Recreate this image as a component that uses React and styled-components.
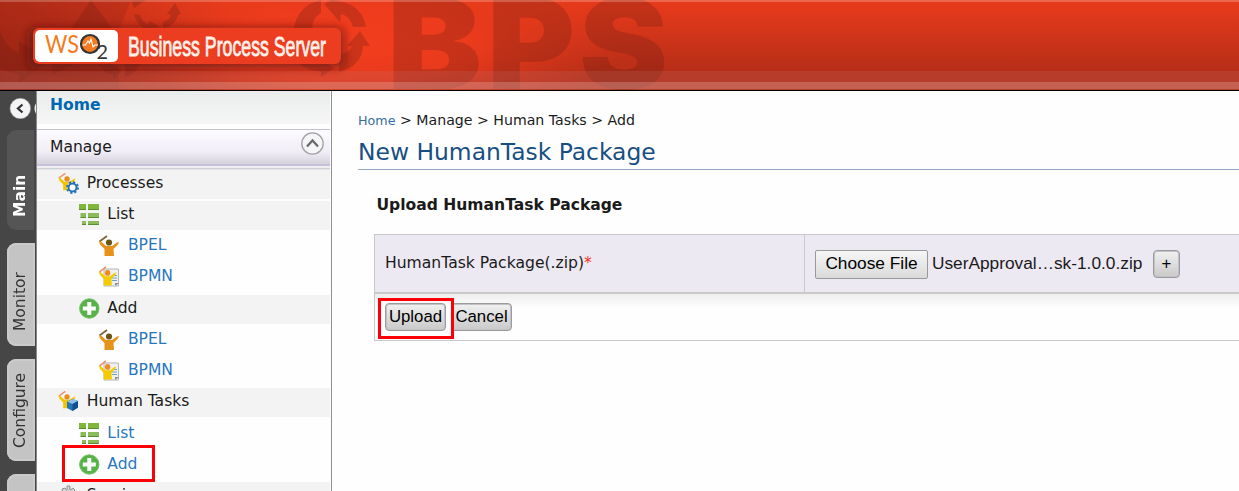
import React from 'react';
import styled, { createGlobalStyle, css } from 'styled-components';

const Global = createGlobalStyle`
  * { box-sizing: border-box; }
  body { margin: 0; background: #fefefe; color: #1a1a1a; font-family: "DejaVu Sans", sans-serif; overflow: hidden; }
`;
const Page = styled.div`
  height: 491px;
  display: flex;
  flex-direction: column;
  overflow: hidden;
`;
const Header = styled.header`
  height: 91px;
  flex: none;
  border-bottom: 1px solid #000;
  svg { display: block; }
`;
const Body = styled.div`
  flex: 1;
  min-height: 0;
  display: flex;
`;
const TabRail = styled.div`
  width: 37px;
  flex: none;
  background: #464646;
  border-right: 1px solid #8a8a8a;
  display: flex;
  flex-direction: column;
  gap: 13px;
  overflow: hidden;
`;
const Toggle = styled.div`
  height: 26px;
  flex: none;
  svg { display: block; }
`;
const Tab = styled.div`
  height: ${p => p.$height}px;
  flex: none;
  margin-left: 7px;
  width: ${p => (p.$active ? 27 : 28)}px;
  border-radius: 0 9px 9px 0;
  display: flex;
  justify-content: center;
  align-items: flex-start;
  writing-mode: vertical-rl;
  transform: rotate(180deg);
  font-size: 15.5px;
  line-height: 27px;
  ${p => p.$active
    ? css`background: #555; color: #fff; font-weight: bold;`
    : css`background: #c4c4c4; color: #333; box-shadow: inset 0 0 0 2px #cbcbcb;`}
`;
const TabLabel = styled.span`
  margin-top: ${p => p.$shift || 0}px;
  white-space: nowrap;
`;
const Menu = styled.nav`
  width: 295px;
  flex: none;
  border-right: 1px solid #8f8f8f;
  padding-right: 1px;
  display: flex;
  flex-direction: column;
  overflow: hidden;
  font-size: 15.55px;
`;
const HomeRow = styled.div`
  height: 33px;
  flex: none;
  margin-bottom: 5px;
  padding: 1px 13px 0;
  line-height: 26px;
  background: linear-gradient(#eaecec, #f6f6f6);
  color: #0067b1;
  font-weight: bold;
`;
const GroupRow = styled.div`
  height: 37px;
  flex: none;
  display: flex;
  justify-content: space-between;
  align-items: flex-start;
  padding: 2px 5px 0 13px;
  line-height: 30px;
  border-top: 1px solid #c5c1d2;
  border-bottom: 2px solid #c7c2da;
  background: linear-gradient(#fdfcff, #f0edf6 65%, #d5d2dc);
`;
const GroupEdge = styled.div`
  height: 4px;
  flex: none;
  margin-bottom: -0.5px;
  background: linear-gradient(#efeff2 0 50%, #d1cfd8 50% 75%, #e4e4e6 75%);
`;
const Item = styled.div`
  height: 31.25px;
  flex: none;
  display: flex;
  align-items: flex-start;
  padding-left: ${p => 21 + p.$level * 20.6}px;
  gap: 7.7px;
  line-height: 27px;
  color: ${p => (p.$link ? '#2876c0' : '#1a1a1a')};
  background: ${p => (p.$link ? '#fefefe' : 'linear-gradient(#f3f3f3, #f3f3f3) 0 0 / 100% 29px no-repeat')};
  svg { flex: none; margin-top: 3px; }
`;
const Content = styled.main`
  flex: 1;
  min-width: 0;
  padding: 18px 0 0 26px;
`;
const Crumbs = styled.div`
  height: 24px;
  line-height: 22px;
  font-size: 14.15px;
  white-space: pre;
`;
const CrumbLink = styled.span`
  font-size: 12.7px;
  color: #386d9f;
`;
const Title = styled.h2`
  margin: 0 0 21px;
  height: 37px;
  line-height: 38px;
  font-size: 23.4px;
  font-weight: normal;
  color: #184f82;
  border-bottom: 1px solid #94a6c2;
`;
const Panel = styled.section`
  margin-left: 16px;
`;
const PanelTitle = styled.h3`
  margin: 0;
  padding-left: 2.5px;
  height: 43px;
  line-height: 28px;
  font-size: 15.55px;
`;
const FormRow = styled.div`
  display: flex;
  height: 60px;
  border: solid #c9c9c9;
  border-width: 1px 0 2px 1px;
  background: #ede9f3;
`;
const LabelCell = styled.div`
  width: 430px;
  border-right: 1px solid #c9c9c9;
  padding-left: 10px;
  line-height: 56px;
  font-size: 15.6px;
`;
const Required = styled.span`
  color: #ff2d18;
`;
const FieldCell = styled.div`
  display: flex;
  align-items: center;
  padding: 1px 0 0 10px;
  font: 17.3px "Liberation Sans", sans-serif;
`;
const FileButton = styled.button`
  width: 113px;
  height: 29px;
  padding: 0 0 2px;
  margin-right: 4px;
  font: inherit;
  color: #000;
  border: 1px solid #999;
  border-radius: 2px;
  background: linear-gradient(#f6f6f6, #dadada);
`;
const FileName = styled.span`
  width: 221px;
  white-space: nowrap;
  padding-bottom: 2px;
`;
const Button = styled.button`
  width: ${p => p.$width}px;
  height: 28px;
  padding: 0;
  font: 16.8px "Liberation Sans", sans-serif;
  line-height: 24px;
  color: #000;
  border: 1px solid #9b9b9f;
  box-shadow: inset 0 0 0 1px #c3c3c5;
  border-radius: 4px;
  background: linear-gradient(#f1f1f1, #c9c9c9);
`;
const ButtonRow = styled.div`
  position: relative;
  height: 47px;
  display: flex;
  gap: 5px;
  padding: 9px 0 0 10px;
  border: solid #c9c9c9;
  border-width: 0 0 1px 1px;
  background: linear-gradient(#eeeeee, #fefefe 14px);
`;
const Highlight = styled.div`
  position: absolute;
  left: ${p => p.$x}px;
  top: ${p => p.$y}px;
  width: ${p => p.$w}px;
  height: ${p => p.$h}px;
  border: 3px solid #fb0007;
`;
const Anchor = styled.div`
  position: relative;
  height: 0;
`;

const Banner = () => (
  <svg width="1239" height="90" viewBox="0 0 1239 90">
    <defs>
      <linearGradient id="base" x2="0" y2="1">
        <stop offset="0" stopColor="#e63c1b" />
        <stop offset=".12" stopColor="#e2391b" />
        <stop offset=".78" stopColor="#b72e17" />
        <stop offset="1" stopColor="#b72e17" />
      </linearGradient>
      <radialGradient id="glow" gradientUnits="userSpaceOnUse" cx="0" cy="0" r="1" gradientTransform="translate(350 44) scale(270 80)">
        <stop offset="0" stopColor="#f23e1e" />
        <stop offset=".45" stopColor="#f03c1d" stopOpacity=".85" />
        <stop offset="1" stopColor="#e23a1b" stopOpacity="0" />
      </radialGradient>
      <linearGradient id="left" x2="1" y2="0">
        <stop offset="0" stopColor="#8c2013" stopOpacity=".5" />
        <stop offset="1" stopColor="#a42715" stopOpacity="0" />
      </linearGradient>
      <filter id="soft" x="-10%" y="-60%" width="120%" height="220%"><feGaussianBlur stdDeviation="5" /></filter>
    </defs>
    <rect width="1239" height="90" fill="url(#base)" />
    <rect width="700" height="90" fill="url(#glow)" />
    <rect width="230" height="90" fill="url(#left)" />
    <path d="M0 0H131L119 30V90H0Z" fill="#7a1d12" fillOpacity=".2" />
    <g fill="#6d1b12" fillOpacity=".28">
      <path d="M91 0L118 36V64H52V75L75 64L60 45Z" />
      <path d="M0 32Q8 50 19 53V41L48 60L19 84V74Q7 73 0 68Z" />
      <path d="M131 0L134 8L146 0ZM134 14L140 15Q142 22 148 24L150 21L160 27L148 30Q136 25 134 14ZM175 3L181 14L178 15Q175 27 163 28V22Q170 20 171 15L167 14Z" />
      <path d="M98 64Q104 74 113 74L114 79L122 70L112 64ZM125 64V77Q136 73 140 64Z" />
      <path d="M321 0V13Q313 17 312 28H294Q298 5 321 0ZM324 4L331 0Q362 2 366 27H353Q350 16 341 14L340 22ZM360 31L370 46H363Q362 66 339 72V55Q351 52 352 46H347ZM321 77V71Q306 72 296 60L318 58L334 68Z" />
      <g fontFamily="Inter, sans-serif" fontWeight="900" fontSize="125">
        <text x="387" y="89" textLength="95" lengthAdjust="spacingAndGlyphs">B</text>
        <text x="487" y="89" textLength="88" lengthAdjust="spacingAndGlyphs">P</text>
        <text x="579" y="89" textLength="89" lengthAdjust="spacingAndGlyphs">S</text>
      </g>
    </g>
    <rect x="27" y="27" width="318" height="42" rx="8" fill="#5c120c" fillOpacity=".6" filter="url(#soft)" />
    <rect y="71" width="1239" height="19" fill="#b9777a" fillOpacity=".2" />
    <rect y="82" width="1239" height="7" fill="#f0d0d0" fillOpacity=".25" />
    <rect width="1239" height="2" fill="#fff" fillOpacity=".22" />
    <rect x="33" y="28" width="308" height="36" rx="6" fill="#ec3d20" />
    <rect x="35" y="30" width="83" height="32" rx="5" fill="#fff" />
    <text x="45" y="53" fontFamily="Lato, sans-serif" fontSize="25" fill="#f47b20" textLength="34" lengthAdjust="spacingAndGlyphs">WS</text>
    <circle cx="90" cy="44" r="9" fill="#f47b20" stroke="#333" strokeWidth="2.2" />
    <path d="M82.5 45H85.5L88 41L89.5 43L91 39L93 47L95 45H98" fill="none" stroke="#fff" strokeWidth="1.1" />
    <text x="96.5" y="59" fontFamily="Lato, sans-serif" fontSize="20" fill="#333" textLength="11.5" lengthAdjust="spacingAndGlyphs">2</text>
    <text x="128" y="56" fontFamily='"Liberation Sans Narrow", "Liberation Sans", sans-serif' fontSize="27" fill="#fff0ea" stroke="#fff0ea" strokeWidth=".8" textLength="198" lengthAdjust="spacingAndGlyphs">Business Process Server</text>
  </svg>
);

const Person = ({ stick = '#d9772f', head = '#e68a17', body = '#f5c400' }) => (
  <>
    <path d="M0.5 6.5L8 1" stroke={stick} strokeWidth="1.7" />
    <path d="M0 6L2 6.5L7 11H13L18 7.5L20 7L19 9.5L14.5 14L15 21H5.5V14L1 9.5Z" fill={body} />
    <circle cx="10" cy="7.5" r="3.1" fill={head} />
  </>
);
const Icon = ({ type }) => (
  <svg width="21" height="21" viewBox="0 0 21 21">
    {type === 'bpel' && <Person stick="#7a6433" head="#6d5415" body="#e6931b" />}
    {type === 'bpmn' && (
      <>
        <path d="M5 3H19.5V20H5Z" fill="#eef0f2" stroke="#b5b5b5" />
        <path d="M12 12H18M13 14.5H18M15 9.5H18" stroke="#6ba3cf" strokeWidth="1.2" />
        <path d="M16 20V17H20L16 20Z" fill="#8f8f8f" />
        <g transform="scale(.86 .93)"><Person stick="#ef8b60" head="#ef8b1e" body="#f2cb00" /></g>
      </>
    )}
    {(type === 'process' || type === 'human') && (
      <g transform="translate(0.5 -0.5) scale(.85)"><Person stick="#ef8b60" head="#ea8a1a" body="#f5c400" /></g>
    )}
    {type === 'process' && (
      <>
        <circle cx="14.5" cy="14.5" r="5.5" fill="#fff" stroke="#2272b8" strokeWidth="1.8" strokeDasharray="2.2 2.1" />
        <circle cx="14.5" cy="14.5" r="4" fill="#fff" stroke="#2272b8" strokeWidth="2" />
      </>
    )}
    {type === 'human' && (
      <>
        <path d="M9 10.5L15 8L20 10V16.5L14.5 20L9 17Z" fill="#2476bb" />
        <path d="M9 10.5L15 8L20 10L14.5 13Z" fill="#8ec0e8" />
        <path d="M14.5 13L20 10V16.5L14.5 20Z" fill="#0d4f91" />
      </>
    )}
    {type === 'list' && (
      <>
        <path d="M0 0H7V6H0ZM9 0H20V6H9Z" fill="#80b63c" />
        <path d="M1.5 9H7V14H1.5ZM9 9H20V14H9ZM3 17H7V21H3ZM9 17H20V21H9Z" fill="#8abb5c" />
        <path d="M0 5.5H7M9 5.5H20M1.5 13.5H7M9 13.5H20M3 20.5H7M9 20.5H20" stroke="#568f2b" />
      </>
    )}
    {type === 'add' && (
      <>
        <circle cx="10.3" cy="10.5" r="9.7" fill="#57b347" stroke="#70bd62" />
        <path d="M10.3 4V17M3.8 10.5H16.8" stroke="#fff" strokeWidth="4" />
      </>
    )}
    {type === 'service' && (
      <path d="M2 8L5 7L4 4L7 3L9 5V1H12V5L15 3L17 5L16 7L19 8V20H2Z" fill="#d2d2d2" stroke="#929292" />
    )}
  </svg>
);

const items = [
  ['process', 'Processes', 0, false],
  ['list', 'List', 1, false],
  ['bpel', 'BPEL', 2, true],
  ['bpmn', 'BPMN', 2, true],
  ['add', 'Add', 1, false],
  ['bpel', 'BPEL', 2, true],
  ['bpmn', 'BPMN', 2, true],
  ['human', 'Human Tasks', 0, false],
  ['list', 'List', 1, true],
  ['add', 'Add', 1, true],
  ['service', 'Services', 0, false],
];

export default function App() {
  return (
    <Page>
      <Global />
      <Header><Banner /></Header>
      <Body>
        <TabRail>
          <Toggle>
            <svg width="36" height="28">
              <circle cx="20.3" cy="17.5" r="10.3" fill="#f4f4f6" stroke="#999" strokeWidth=".6" />
              <path d="M22.5 13.5L18 17.5L22.5 21.5" fill="none" stroke="#333" strokeWidth="2.3" />
              <circle cx="44.5" cy="17.5" r="10" fill="#eee" />
            </svg>
          </Toggle>
          <Tab $height={100} $active><TabLabel $shift={-32}>Main</TabLabel></Tab>
          <Tab $height={103}><TabLabel $shift={-14}>Monitor</TabLabel></Tab>
          <Tab $height={102}><TabLabel>Configure</TabLabel></Tab>
          <Tab $height={90} />
        </TabRail>
        <Menu>
          <HomeRow>Home</HomeRow>
          <GroupRow>
            Manage
            <svg width="24" height="24">
              <circle cx="11.5" cy="11.5" r="10.7" fill="#f5f4f7" stroke="#a2a2a2" strokeWidth="1.3" />
              <path d="M6 14.5L11.5 8.5L17 14.5" fill="none" stroke="#6a6a6a" strokeWidth="2.3" />
            </svg>
          </GroupRow>
          <GroupEdge />
          {items.map(([type, label, level, link], i) => (
            <Item key={i} $level={level} $link={link}><Icon type={type} />{label}</Item>
          ))}
        </Menu>
        <Content>
          <Crumbs><CrumbLink>Home</CrumbLink>{' > Manage > Human Tasks > Add'}</Crumbs>
          <Title>New HumanTask Package</Title>
          <Panel>
            <PanelTitle>Upload HumanTask Package</PanelTitle>
            <FormRow>
              <LabelCell>HumanTask Package(.zip)<Required>*</Required></LabelCell>
              <FieldCell>
                <FileButton>Choose File</FileButton>
                <FileName>UserApproval…sk-1.0.0.zip</FileName>
                <Button $width={27}>+</Button>
              </FieldCell>
            </FormRow>
            <ButtonRow>
              <Button $width={61}>Upload</Button>
              <Button $width={61}>Cancel</Button>
              <Highlight $x={3} $y={4} $w={76} $h={41} />
            </ButtonRow>
          </Panel>
        </Content>
      </Body>
      <Anchor><Highlight $x={62} $y={-46} $w={93} $h={37} /></Anchor>
    </Page>
  );
}
